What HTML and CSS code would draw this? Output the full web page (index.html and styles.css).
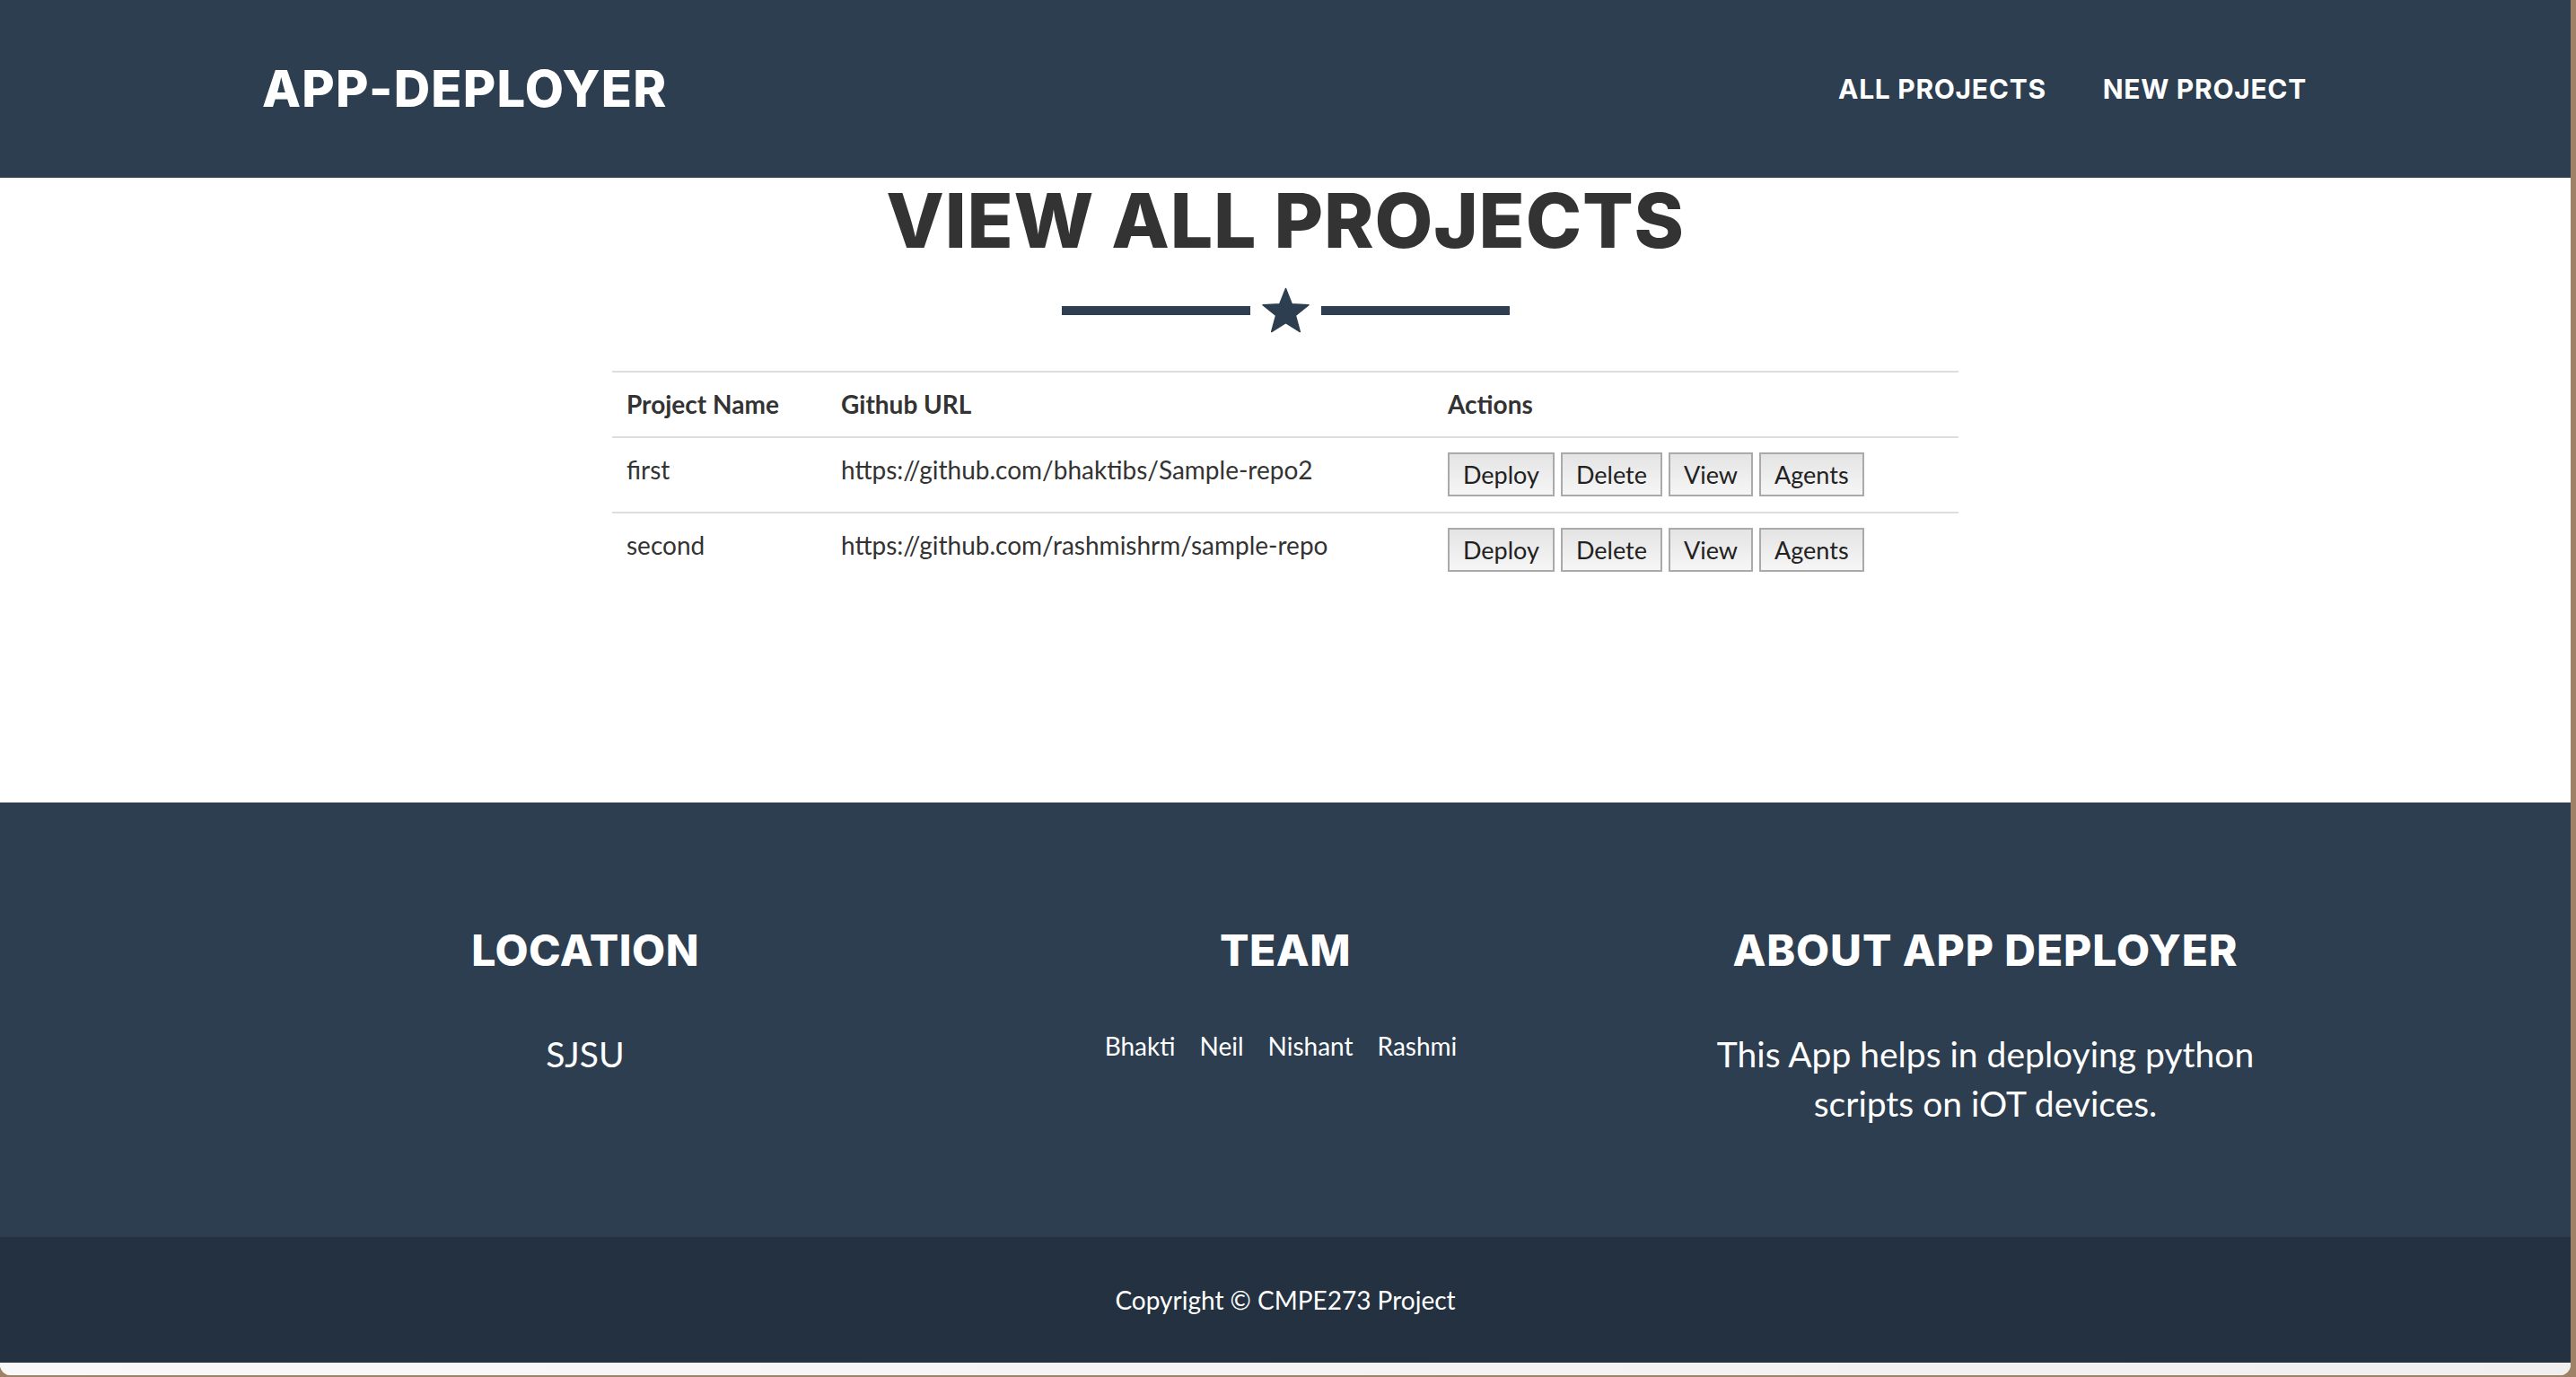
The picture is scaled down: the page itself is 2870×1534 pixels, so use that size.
FILE: index.html
```html
<!DOCTYPE html>
<html lang="en">
<head>
<meta charset="utf-8">
<title>App Deployer</title>
<link rel="stylesheet" href="styles.css">
</head>
<body>
<div class="window">
  <header class="navbar">
    <a class="brand" href="#">APP-DEPLOYER</a>
    <nav class="nav">
      <a href="#">ALL PROJECTS</a>
      <a href="#">NEW PROJECT</a>
    </nav>
  </header>

  <main class="projects">
    <h2 class="title">VIEW ALL PROJECTS</h2>
    <div class="divider">
      <span class="line"></span>
      <svg class="star" width="53" height="51" viewBox="0 0 53 51">
        <polygon points="26.5,1.5 33.3,18.7 52,19.7 37.4,31.5 42.3,49.5 26.5,39.5 10.7,49.5 15.6,31.5 1,19.7 19.7,18.7" fill="#2c3e50" stroke="#2c3e50" stroke-width="1.5" stroke-linejoin="round"/>
      </svg>
      <span class="line"></span>
    </div>

    <table class="table">
      <colgroup>
        <col class="c-name">
        <col class="c-url">
        <col class="c-actions">
      </colgroup>
      <tr>
        <th>Project Name</th>
        <th>Github URL</th>
        <th>Actions</th>
      </tr>
      <tr>
        <td>first</td>
        <td>https://github.com/bhaktibs/Sample-repo2</td>
        <td>
          <div class="actions">
            <button class="btn">Deploy</button>
            <button class="btn">Delete</button>
            <button class="btn">View</button>
            <button class="btn">Agents</button>
          </div>
        </td>
      </tr>
      <tr>
        <td>second</td>
        <td>https://github.com/rashmishrm/sample-repo</td>
        <td>
          <div class="actions">
            <button class="btn">Deploy</button>
            <button class="btn">Delete</button>
            <button class="btn">View</button>
            <button class="btn">Agents</button>
          </div>
        </td>
      </tr>
    </table>
  </main>

  <footer class="footer">
    <div class="footer-above">
      <div class="footer-col">
        <h3>LOCATION</h3>
        <p>SJSU</p>
      </div>
      <div class="footer-col">
        <h3>TEAM</h3>
        <ul class="team">
          <li>Bhakti</li>
          <li>Neil</li>
          <li>Nishant</li>
          <li>Rashmi</li>
        </ul>
      </div>
      <div class="footer-col">
        <h3 class="wide">ABOUT APP DEPLOYER</h3>
        <p class="about">This App helps in deploying python scripts on iOT devices.</p>
      </div>
    </div>
    <div class="footer-below">Copyright © CMPE273 Project</div>
  </footer>
  <div class="window-bottom"></div>
</div>
</body>
</html>
```

FILE: styles.css
```css
html, body {
  margin: 0;
  padding: 0;
}

body {
  width: 2870px;
  height: 1534px;
  overflow: hidden;
  background: #9e8167;
  font-family: "Lato", "Liberation Sans", sans-serif;
}

.window {
  width: 2864px;
  background: #ffffff;
  border-radius: 0 0 12px 12px;
  overflow: hidden;
  display: flex;
  flex-direction: column;
}

/* ---------- header ---------- */
.navbar {
  height: 198px;
  box-sizing: border-box;
  background: #2c3e50;
  display: flex;
  align-items: center;
  justify-content: space-between;
  padding: 0 294px 0 292px;
}

.brand {
  font-family: "Inter", "Liberation Sans", sans-serif;
  font-weight: 800;
  font-size: 56px;
  line-height: 1;
  letter-spacing: 1.2px;
  color: #ffffff;
  text-decoration: none;
}

.nav {
  display: flex;
  gap: 63px;
}

.nav a {
  font-family: "Inter", "Liberation Sans", sans-serif;
  font-weight: 700;
  font-size: 30px;
  line-height: 1;
  letter-spacing: 0.7px;
  color: #ffffff;
  text-decoration: none;
}

/* ---------- projects ---------- */
.projects {
  height: 696px;
  display: flex;
  flex-direction: column;
  align-items: center;
}

.title {
  margin: 6px 0 0;
  font-family: "Inter", "Liberation Sans", sans-serif;
  font-weight: 800;
  font-size: 84px;
  line-height: 84px;
  letter-spacing: 0.8px;
  color: #333333;
}

.divider {
  margin-top: 32px;
  height: 51px;
  display: flex;
  align-items: center;
  gap: 13px;
}

.line {
  display: block;
  width: 210px;
  height: 10px;
  background: #2c3e50;
}

.star {
  display: block;
}

.table {
  margin-top: 42px;
  width: 1500px;
  table-layout: fixed;
  border-collapse: collapse;
  font-size: 28px;
  color: #333333;
}

.c-name { width: 239px; }
.c-url { width: 676px; }
.c-actions { width: 585px; }

.table th,
.table td {
  padding: 15px 16px 16px;
  border-top: 2px solid #dddddd;
  text-align: left;
  vertical-align: top;
  line-height: 40px;
  white-space: nowrap;
}

.table th {
  font-weight: 700;
}

.actions {
  display: flex;
  gap: 7px;
  height: 51px;
  padding-top: 1px;
  box-sizing: border-box;
}

.btn {
  height: 49px;
  box-sizing: border-box;
  padding: 0 15px;
  border: 2px solid #aaaaaa;
  border-radius: 0;
  background: linear-gradient(#e4e4e4, #f6f6f6);
  font-family: "Lato", "Liberation Sans", sans-serif;
  font-size: 27px;
  color: #222222;
  line-height: 1;
}

/* ---------- footer ---------- */
.footer-above {
  height: 484px;
  box-sizing: border-box;
  background: #2c3e50;
  display: grid;
  grid-template-columns: repeat(3, 780px);
  justify-content: center;
  padding-top: 141px;
  color: #ffffff;
}

.footer-col {
  padding: 0 30px;
  text-align: center;
}

.footer-col h3 {
  margin: 0 0 64px;
  font-family: "Inter", "Liberation Sans", sans-serif;
  font-weight: 800;
  font-size: 48px;
  line-height: 48px;
  letter-spacing: 0.5px;
}

.footer-col h3.wide {
  letter-spacing: 0.9px;
}

.footer-col p {
  margin: 0;
  font-size: 39px;
  line-height: 55px;
}

.footer-col .about {
  max-width: 700px;
  margin: 0 auto;
}

.team {
  list-style: none;
  margin: -2px 0 0 -10px;
  padding: 0;
  display: flex;
  justify-content: center;
  gap: 27px;
  font-size: 28px;
  line-height: 40px;
}

.footer-below {
  height: 140px;
  background: #233140;
  color: #ffffff;
  display: flex;
  align-items: center;
  justify-content: center;
  font-size: 28px;
}

.window-bottom {
  height: 14px;
  background: linear-gradient(90deg, #f8f8f8, #efefef);
}
```
